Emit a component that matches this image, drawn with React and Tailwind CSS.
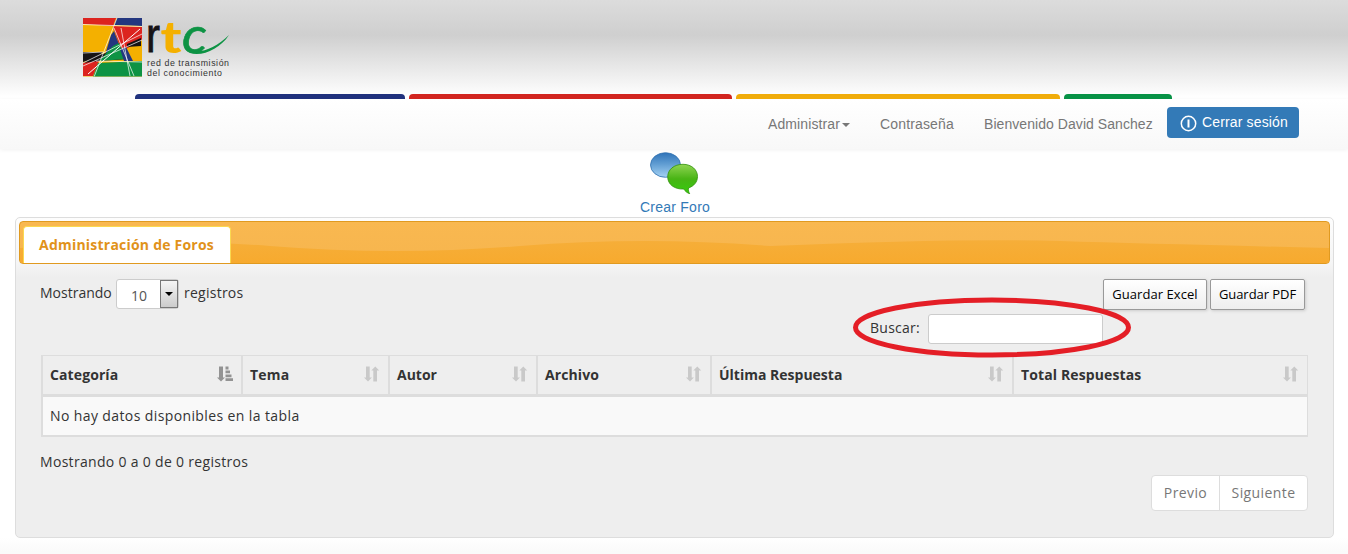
import React from "react";

const TREB = "font-['Open_Sans',sans-serif]";

function SortBoth() {
  return (
    <svg className="h-4 w-4 shrink-0" viewBox="0 0 16 16" fill="#c9c9c9">
      <path d="M2 0.500h3.700v11h2.200L4 15.500 0 11.500h2z" />
      <path d="M9.300 15.500h3.700V4.500h2.200L11.300 0.500 7.300 4.500h2z" />
    </svg>
  );
}

function SortAsc() {
  return (
    <svg className="h-4 w-4 shrink-0" viewBox="0 0 16 16" fill="#939393">
      <path d="M2 0.500h4v11h2L4 15.500 0 11.500h2z" />
      <path d="M8.500 .6h3v2.800h-3zM8.500 4.500h4.500v2.800h-4.500zM8.500 8.400h6v2.800h-6zM8.500 12.300h7.500v2.800h-7.500z" />
    </svg>
  );
}

const columns = [
  { name: "Categoría", width: "w-[198px]", track: "tracking-[0.1px]", sorted: true },
  { name: "Tema", width: "w-[147px]", track: "tracking-[0.2px]" },
  { name: "Autor", width: "w-[148px]", track: "tracking-normal" },
  { name: "Archivo", width: "w-[174px]", track: "tracking-[0.1px]" },
  { name: "Última Respuesta", width: "w-[302px]", track: "tracking-normal" },
  { name: "Total Respuestas", width: "w-[295px]", track: "tracking-[0.12px]" },
];

function Logo() {
  return (
    <svg className="block h-[84px] w-[160px]" viewBox="83 0 160 84">
      <defs>
        <clipPath id="sq"><rect x="83" y="18" width="59" height="58.500" /></clipPath>
      </defs>
      <g clipPath="url(#sq)">
        <rect x="83" y="18" width="59" height="59" fill="#f4b000" />
        <path d="M83 18h33l-3 8-30-2z" fill="#dc241f" />
        <path d="M117 18h25v8l-28-1z" fill="#24377f" />
        <path d="M113 26l29 1v13l-16 9-13 3z" fill="#dc241f" />
        <path d="M113 27l-9 25 15-8z" fill="#f4b000" />
        <path d="M111 35l3-4 6 16-15 8z" fill="#24377f" />
        <path d="M127 44l14-6v8l-14 1z" fill="#171315" />
        <path d="M83 52h20l-6 6-14 4z" fill="#171315" />
        <path d="M83 63l17-5-7 18H83z" fill="#dc241f" />
        <path d="M83 63l18-9 24-4 4 9-30 2z" fill="#171315" />
        <path d="M99 61l14-15 6-3 7 16z" fill="#0d9344" />
        <path d="M98 63l44-2v16H93z" fill="#0d9344" />
        <path d="M120 49l6-2 7 14h-9z" fill="#24377f" />
        <path d="M129 47h13v13l-9-1z" fill="#f4b000" />
        <g stroke="#fff" strokeWidth=".7" fill="none">
          <path d="M83 24.500l59 2M117 18L94 77M114 28l20 48M121 28l9 48M83 63l59-29M83 66l59-26M83 53l20-1M96 61l46 1" />
          <path d="M88 74l52-45" strokeWidth="1" />
        </g>
      </g>
      <text x="146" y="52" fontFamily="Liberation Sans" fontSize="48" fill="#161416" stroke="#161416" strokeWidth=".8" textLength="14" lengthAdjust="spacingAndGlyphs">r</text>
      <text x="160.500" y="53" fontFamily="Lato" fontWeight="900" fontSize="43" fill="#f4b000" textLength="21" lengthAdjust="spacingAndGlyphs">t</text>
      <text x="182" y="52.500" fontFamily="Lato" fontStyle="italic" fontSize="50" fill="#0d9344" stroke="#0d9344" strokeWidth=".6" textLength="25" lengthAdjust="spacingAndGlyphs">c</text>
      <path d="M188 50c14 4 27-2 41-15-9 14-27 22-39 18z" fill="#0d9344" />
      <text x="147" y="65.500" fontFamily="Liberation Sans" fontSize="8.800" fill="#333" textLength="82">red de transmisión</text>
      <text x="147" y="75.500" fontFamily="Liberation Sans" fontSize="8.800" fill="#333" textLength="75">del conocimiento</text>
    </svg>
  );
}

export default function App() {
  return (
    <div className={`relative h-[554px] w-[1348px] overflow-hidden bg-[linear-gradient(to_bottom,#fff_538px,#fafafa_552px)] text-[#333] ${TREB}`}>
      <header className="flex h-[99px] flex-col justify-between bg-[linear-gradient(to_bottom,#dcdcdc_0,#cfcfcf_35px,#fff_97px)]">
        <div className="pl-[83px]"><Logo /></div>
        <div className="flex h-[5px] gap-1 pl-[135px]">
          <div className="w-[270px] rounded-t-[4px] bg-[#20317d]" />
          <div className="w-[323px] rounded-t-[4px] bg-[#d22520]" />
          <div className="w-[324px] rounded-t-[4px] bg-[#f0ac0a]" />
          <div className="w-[108px] rounded-t-[4px] bg-[#079246]" />
        </div>
      </header>
      <nav className="flex h-[50px] items-start bg-linear-to-b from-white to-[#f8f8f8] pl-[768px] pt-2 font-['Liberation_Sans',sans-serif] text-[14px] leading-5 text-[#777] shadow-[0_1px_4px_rgba(0,0,0,0.06)]">
        <a className="flex w-[112px] items-center pt-[7px] tracking-[0.1px]">Administrar<span className="ml-[2px] mt-[2px] border-x-4 border-t-4 border-x-transparent border-t-[#777]" /></a>
        <a className="w-[104px] pt-[7px] tracking-[0.15px]">Contraseña</a>
        <a className="w-[183px] whitespace-nowrap pt-[7px] tracking-[0.06px]">Bienvenido David Sanchez</a>
        <button className="flex h-[31px] w-[132px] items-center rounded bg-[#337ab7] pl-[13px] tracking-[0.15px] text-white">
          <svg className="mr-[5px] mt-px h-[17px] w-[17px]" viewBox="0 0 17 17" fill="none" stroke="white" strokeWidth="1.500"><circle cx="8.500" cy="8.500" r="7.200" /><path d="M8.500 4.500v8" strokeWidth="2" /></svg>
          <span className="pb-[2px]">Cerrar sesión</span>
        </button>
      </nav>
      <div className="flex h-[68px] flex-col items-center pt-[3px] font-['Liberation_Sans',sans-serif] text-[14px] text-[#337ab7]">
        <svg className="h-[42px] w-[48px]" viewBox="0 0 48 42">
          <defs>
            <linearGradient id="bl" x1="0" y1="0" x2="0" y2="1"><stop stopColor="#2f73b8" /><stop offset=".45" stopColor="#5f9cd2" /><stop offset="1" stopColor="#a5d2f3" /></linearGradient>
            <linearGradient id="gr" x1="0" y1="0" x2="0" y2="1"><stop stopColor="#8fd452" /><stop offset=".5" stopColor="#48b414" /><stop offset="1" stopColor="#35cc0d" /></linearGradient>
          </defs>
          <ellipse cx="15.500" cy="13" rx="15" ry="12.300" fill="url(#bl)" stroke="#2f70af" strokeWidth=".8" />
          <path d="M33 12.300c-9 0-15.300 5.400-15.300 12.500 0 7.400 6.500 12.700 16 12.200 1.500 2.200 3.500 4 6 4.700-1.200-1.800-1.500-3.600-1.200-5.700 5.500-2 9-6 9-11.500 0-6.800-6-12.200-14.500-12.200z" fill="url(#gr)" stroke="#31900d" strokeWidth=".8" />
        </svg>
        <span className="ml-[2px] mt-[3px] leading-5 tracking-[0.25px]">Crear Foro</span>
      </div>
      <main className="ml-[15px] h-[321px] w-[1319px] rounded-[5px] border border-[#ddd] bg-[linear-gradient(to_bottom,#fdfdfd_0,#f5f5f5_46px,#eee_60px)] px-[3px] pt-[3px]">
        <div className="relative flex h-[43px] items-start overflow-hidden rounded border border-[#e09a20] bg-[linear-gradient(to_bottom,#f9b850_0,#f6b54e_100%)] pl-[3px] pt-1">
          <svg className="absolute left-0 top-0 h-[41px] w-[1309px]" viewBox="0 0 1309 41" preserveAspectRatio="none">
            <defs><linearGradient id="wave" x1="0" y1="0" x2="0" y2="1"><stop stopColor="#f6ae39" /><stop offset="1" stopColor="#f7aa2e" /></linearGradient></defs>
            <path d="M0 26Q125 14 250 24T500 24T750 24Q940 16 1040 19T1309 26V41H0z" fill="url(#wave)" />
          </svg>
          <div className="relative h-[38px] w-[208px] rounded-t-[4px] border border-b-0 border-[#fbd850] bg-white pl-[15px] text-[14px] font-bold leading-[36px] tracking-[0.22px] text-[#e1921a]">Administración de Foros</div>
        </div>
        <div className="pl-[22px] pr-[21px] pt-[15px]">
          <div className="flex justify-between">
            <div className="-ml-px flex h-[31px] items-center text-[14px]">
              <span className="w-[76px] pb-[5px]">Mostrando</span>
              <div className="mb-px flex h-[30px] w-[63px] justify-between rounded-[3px] border border-[#ccc] bg-white">
                <span className="pl-[14px] pt-[5px] text-[#555]">10</span>
                <span className="flex w-[18px] items-center justify-center border border-[#777] bg-linear-to-b from-[#f5f5f5] to-[#ccc]"><i className="border-x-4 border-t-4 border-x-transparent border-t-black" /></span>
              </div>
              <span className="pb-[5px] pl-[5px] tracking-[0.25px]">registros</span>
            </div>
            <div className="mr-1 flex h-[31px] gap-[3px] text-[13px] text-black">
              <button className="w-[104px] rounded-[2px] border border-[#999] bg-linear-to-b from-white to-[#eee] tracking-[0.06px] shadow-[1px_1px_3px_#ccc]">Guardar Excel</button>
              <button className="w-[95px] rounded-[2px] border border-[#999] bg-linear-to-b from-white to-[#eee] tracking-[-0.05px] shadow-[1px_1px_3px_#ccc]">Guardar PDF</button>
            </div>
          </div>
          <div className="mt-[4px] flex h-[30px] items-center pl-[829px] text-[14px]">
            <span className="w-[58px] pb-[3px] tracking-[0.25px]">Buscar:</span>
            <input className="h-[30px] w-[175px] rounded-[3px] border border-[#ccc] bg-white" />
          </div>
          <div className="mt-[11px] w-[1267px] border border-b-2 border-l-2 border-[#ddd] text-[14px]">
            <div className="flex h-[41px] border-b-[3px] border-[#ddd] font-bold">
              {columns.map((c, i) => (
                <div key={c.name} className={`flex shrink-0 items-center justify-between pb-[2px] pr-[8px] ${i ? "border-l-2 border-[#ddd] pl-[7px]" : "pl-[7px]"} ${c.width}`}>
                  <span className={c.track}>{c.name}</span>{c.sorted ? <SortAsc /> : <SortBoth />}
                </div>
              ))}
            </div>
            <div className="h-[38px] bg-[#f9f9f9] pl-[7px] leading-[38px] tracking-[0.39px]"><span>No hay datos disponibles en la tabla</span></div>
          </div>
          <div className="-ml-px mt-[15px] h-5 text-[14px] leading-5 tracking-[0.31px]"><span>Mostrando 0 a 0 de 0 registros</span></div>
          <div className="mr-px mt-[3px] flex justify-end text-[14px] text-[#777]">
            <div className="flex h-[36px] w-[157px] rounded border border-[#ddd] bg-white leading-[34px] tracking-[0.4px]">
              <span className="w-[68px] border-r border-[#ddd] text-center">Previo</span><span className="flex-1 text-center">Siguiente</span>
            </div>
          </div>
        </div>
      </main>
      <svg className="absolute left-[850px] top-[296px] h-[64px] w-[284px]" viewBox="0 0 284 64"><ellipse cx="142" cy="31.500" rx="136.500" ry="27.500" fill="none" stroke="#e41e26" strokeWidth="5" /></svg>
    </div>
  );
}
